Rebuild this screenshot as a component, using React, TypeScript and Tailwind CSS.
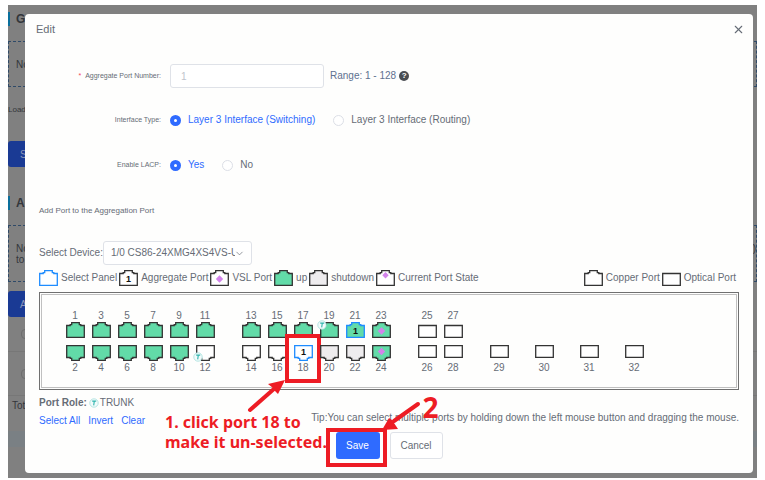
import React from 'react';
import { ChevronDown, X } from 'lucide-react';

type PortKind = 'copper' | 'optical';

type Port = {
  id: number;
  kind?: PortKind;
  fill?: string;
  stroke?: string;
  member?: boolean;
  vsl?: boolean;
  trunk?: boolean;
  marked?: boolean;
};

const UP = '#62dba8';
const DOWN = '#eeecee';
const DARK = '#333333';
const BLUE = '#1e8cff';
const VIOLET = '#d283ea';
const RED = '#ed1c24';

const up = (id: number, extra: Partial<Port> = {}): Port => ({ id, fill: UP, ...extra });
const optical = (id: number): Port => ({ id, kind: 'optical' });

// each column holds the odd port on top and the even one below
const groups: Port[][][] = [
  [
    [up(1), up(2)],
    [up(3), up(4)],
    [up(5), up(6)],
    [up(7), up(8)],
    [up(9), up(10)],
    [up(11), { id: 12, trunk: true }],
  ],
  [
    [up(13), { id: 14 }],
    [up(15), { id: 16 }],
    [up(17), { id: 18, stroke: BLUE, member: true, marked: true }],
    [up(19, { trunk: true }), { id: 20, fill: DOWN }],
    [up(21, { stroke: BLUE, member: true }), { id: 22, fill: DOWN }],
    [up(23, { vsl: true }), up(24, { vsl: true })],
  ],
  [
    [optical(25), optical(26)],
    [optical(27), optical(28)],
  ],
];

const singles: Port[] = [optical(29), optical(30), optical(31), optical(32)];

type IconProps = {
  kind?: PortKind;
  fill?: string;
  stroke?: string;
  flip?: boolean;
  member?: boolean;
  vsl?: boolean;
  state?: boolean;
};

const PortIcon = ({ kind = 'copper', fill = '#ffffff', stroke = DARK, flip, member, vsl, state }: IconProps) => {
  const outline =
    kind === 'optical'
      ? 'M0.7 3.5H18.3V15.3H0.7Z'
      : 'M0.7 15.3V3.5H4.2V2.6H5.7V0.7H13.3V2.6H14.8V3.5H18.3V15.3Z';
  const turned = flip && kind === 'copper';
  const cy = turned ? 6.5 : 9;

  return (
    <svg width="19" height="16" viewBox="0 0 19 16" className="shrink-0" aria-hidden="true">
      <path
        d={outline}
        fill={fill}
        stroke={stroke}
        strokeWidth="1.3"
        transform={flip ? (turned ? 'translate(0 16) scale(1 -1)' : 'translate(0 -3)') : undefined}
      />
      {member && (
        <text x="9.5" y={cy + 3} textAnchor="middle" fontSize="9" fontWeight="700" fill="#111111">
          1
        </text>
      )}
      {vsl && <path d={`M9.5 ${cy - 3.7}l3.7 3.7l-3.7 3.7l-3.7 -3.7Z`} fill={VIOLET} />}
      {state && <path d="M9.5 2l3.2 3.2l-3.2 3.2l-3.2 -3.2Z" fill={VIOLET} />}
    </svg>
  );
};

const TrunkIcon = () => (
  <svg width="10" height="10" viewBox="0 0 10 10" className="shrink-0" aria-hidden="true">
    <circle cx="5" cy="5" r="4.2" fill="#f2fbfb" stroke="#a5dfdc" strokeWidth="0.8" />
    <path d="M3.2 3.1H7.2M5.3 3.1L4.7 7.4" stroke="#2fb5ae" strokeWidth="1.1" fill="none" />
  </svg>
);

const PortButton = ({ port, bottom }: { port: Port; bottom?: boolean }) => (
  <button
    type="button"
    className={`relative flex w-[26px] items-center ${bottom ? 'flex-col' : 'flex-col-reverse'}`}
  >
    <PortIcon
      kind={port.kind}
      fill={port.fill}
      stroke={port.stroke}
      flip={bottom}
      member={port.member}
      vsl={port.vsl}
    />
    <span className="leading-[13px]">{port.id}</span>
    {port.trunk && (
      <span className={`absolute left-px ${bottom ? 'top-[7px]' : 'top-[11px]'}`}>
        <TrunkIcon />
      </span>
    )}
    {port.marked && (
      <>
        <span className="absolute -left-[5px] -top-[11px] h-[49px] w-9 border-4 border-[#ed1c24]" />
        <svg
          width="44"
          height="40"
          viewBox="0 0 44 40"
          className="absolute -left-[44px] top-[32px] z-10"
          aria-hidden="true"
        >
          <path d="M4 33L29 11" stroke={RED} strokeWidth="4" strokeLinecap="round" />
          <path d="M39 3L22 7L27 11L29 14L32 17Z" fill={RED} />
        </svg>
      </>
    )}
  </button>
);

const LegendItem = ({ label, ...icon }: IconProps & { label: string }) => (
  <li className="flex items-center gap-[3px]">
    <PortIcon {...icon} />
    <span className="whitespace-nowrap">{label}</span>
  </li>
);

const Radio = ({ name, label, checked }: { name: string; label: string; checked?: boolean }) => (
  <label className={`flex items-center gap-[7px] ${checked ? 'text-[#2f6bff]' : ''}`}>
    <input
      type="radio"
      name={name}
      defaultChecked={checked}
      className="size-[11px] appearance-none rounded-full border border-[#dcdfe6] bg-white checked:border-4 checked:border-[#2f6bff]"
    />
    {label}
  </label>
);

const FieldName = ({ children }: { children: React.ReactNode }) => (
  <span className="w-[136px] shrink-0 text-right text-[7px]">{children}</span>
);

// dimmed page that stays visible around the dialog
const Backdrop = () => (
  <div className="absolute inset-0 overflow-hidden bg-[#808080] text-[10px] leading-[11px] text-[#33363b]">
    <h2 className="mt-[7px] border-l-2 border-[#0a6f9c] pl-1.5 text-xs font-bold leading-[14px]">G</h2>
    <div className="mt-[15px] flex h-[46px] items-center border border-dashed border-[#2f4a68] pl-[7px]">No</div>
    <p className="mt-[17px] text-[8px]">Load</p>
    <button type="button" className="mt-[26px] block h-[26px] w-10 rounded-[3px] bg-[#1a3a94] pl-3 text-left text-[#8d97b8]">
      S
    </button>
    <h2 className="mt-[29px] border-l-2 border-[#0a6f9c] pl-1.5 text-xs font-bold leading-[14px]">A</h2>
    <div className="mt-[15px] flex h-[57px] items-center justify-between border border-dashed border-[#2f4a68] pl-[7px]">
      <p>
        No
        <br />
        to
      </p>
      <p className="pb-[11px]">)</p>
    </div>
    <button type="button" className="mt-[9px] block h-[26px] w-10 rounded-[3px] bg-[#1a3a94] pl-3 text-left text-[#8d97b8]">
      A
    </button>
    <div className="flex h-[35px] items-center border-b border-[#777777] pl-[13px]">
      <span className="size-[10px] rounded-sm border border-[#6e6e6e]" />
    </div>
    <div className="flex h-11 items-center border-b border-[#777777] pl-[13px]">
      <span className="size-[10px] rounded-sm border border-[#6e6e6e]" />
    </div>
    <p className="mt-1 pl-1">Tot</p>
    <div className="mt-5 h-4 bg-[#7a8084]" />
  </div>
);

const App = () => {
  return (
    <div className="bg-white px-2 pb-0.5 pt-[5px] font-['Liberation_Sans',Arial,sans-serif] text-[10px] leading-3 text-[#666c76]">
      <div className="relative pb-[5px] pl-[17px] pr-1 pt-[9px]">
        <Backdrop />

        <div role="dialog" aria-label="Edit" className="relative rounded-sm bg-[#fefefd] pb-[14px]">
          <header className="flex items-center justify-between pl-[11px] pr-2 pt-[7px]">
            <h1 className="text-[11px] leading-4">Edit</h1>
            <button type="button" aria-label="Close">
              <X size={13} strokeWidth={2} />
            </button>
          </header>

          <form className="mt-[27px]" onSubmit={(e) => e.preventDefault()}>
            <div className="flex h-6 items-center">
              <label htmlFor="port-number" className="flex">
                <FieldName>
                  <span className="mr-1 text-[#f5455c]">*</span>
                  Aggregate Port Number:
                </FieldName>
              </label>
              <input
                id="port-number"
                disabled
                defaultValue="1"
                className="ml-[9px] h-6 w-[154px] rounded-[3px] border border-[#dfe2e8] bg-white px-2.5 text-[10px] text-[#c0c4cc]"
              />
              <span className="ml-1.5 text-[#5e7190]">Range: 1 - 128</span>
              <button
                type="button"
                aria-label="Help"
                className="ml-[3px] flex size-[10px] items-center justify-center rounded-full bg-[#4a4d52] text-[8px] font-bold leading-none text-white"
              >
                ?
              </button>
            </div>

            <div className="mt-5 flex h-6 items-center" role="radiogroup" aria-label="Interface Type">
              <FieldName>Interface Type:</FieldName>
              <div className="ml-[9px] flex gap-[18px]">
                <Radio name="type" label="Layer 3 Interface (Switching)" checked />
                <Radio name="type" label="Layer 3 Interface (Routing)" />
              </div>
            </div>

            <div className="mt-[21px] flex h-6 items-center" role="radiogroup" aria-label="Enable LACP">
              <FieldName>Enable LACP:</FieldName>
              <div className="ml-[9px] flex gap-[18px]">
                <Radio name="lacp" label="Yes" checked />
                <Radio name="lacp" label="No" />
              </div>
            </div>
          </form>

          <section className="pl-[14px] pr-[14px] pt-7">
            <h2 className="text-[8px]">Add Port to the Aggregation Port</h2>

            <div className="mt-[24px] flex items-center">
              <label htmlFor="device">Select Device:</label>
              <div className="relative">
                <select
                  id="device"
                  className="h-6 w-[149px] appearance-none rounded-[3px] border border-[#dfe2e8] bg-white pl-[7px] pr-4"
                >
                  <option>1/0 CS86-24XMG4XS4VS-U</option>
                </select>
                <ChevronDown size={11} strokeWidth={1.5} className="absolute right-[7px] top-[7px]" />
              </div>
            </div>

            <div className="mt-[5px] flex justify-between">
              <ul className="flex gap-0.5">
                <LegendItem label="Select Panel" stroke={BLUE} />
                <LegendItem label="Aggregate Port" member />
                <LegendItem label="VSL Port" vsl />
                <LegendItem label="up" fill={UP} />
                <LegendItem label="shutdown" fill={DOWN} />
                <LegendItem label="Current Port State" state />
              </ul>
              <ul className="flex gap-0.5 pr-[3px]">
                <LegendItem label="Copper Port" />
                <LegendItem label="Optical Port" kind="optical" />
              </ul>
            </div>

            <div className="mt-1.5 border border-[#707070] p-px">
              <div className="flex items-end gap-5 border border-[#c0c0c0] pb-[13px] pl-5 pt-[14px]">
                {groups.map((columns, index) => (
                  <div key={index} className="flex">
                    {columns.map(([top, bottom]) => (
                      <div key={top.id} className="flex flex-col gap-[7px]">
                        <PortButton port={top} />
                        <PortButton port={bottom} bottom />
                      </div>
                    ))}
                  </div>
                ))}
                <div className="flex gap-[19px]">
                  {singles.map((port) => (
                    <PortButton key={port.id} port={port} bottom />
                  ))}
                </div>
              </div>
            </div>

            <div className="relative mt-[7px]">
              <p className="flex items-center">
                <strong>Port Role:</strong>
                <span className="ml-0.5 mr-px">
                  <TrunkIcon />
                </span>
                TRUNK
              </p>
              <div className="mt-[3px] flex justify-between">
                <div className="mt-[3px] flex gap-2 text-[#2f6bff]">
                  <button type="button">Select All</button>
                  <button type="button">Invert</button>
                  <button type="button">Clear</button>
                </div>
                <p>
                  Tip:You can select multiple ports by holding down the left mouse button and dragging the mouse.
                </p>
              </div>
              <p className="absolute left-[126px] top-[15px] font-['Noto_Sans','Open_Sans',sans-serif] text-base font-bold leading-5 text-[#ed1c24]">
                1. click port 18 to
                <br />
                make it un-selected.
              </p>
            </div>
          </section>

          <footer className="mt-[5px] flex justify-center gap-[10px]">
            <div className="relative">
              <button type="button" className="h-[27px] w-11 rounded-[3px] bg-[#2f6bff] text-white">
                Save
              </button>
              <span className="absolute -left-[10px] -top-1 h-[39px] w-[61px] border-4 border-[#ed1c24]" />
              <svg
                width="44"
                height="36"
                viewBox="0 0 44 36"
                className="absolute left-[42px] -top-[32px]"
                aria-hidden="true"
              >
                <path d="M40 4L16 21" stroke={RED} strokeWidth="4" strokeLinecap="round" />
                <path d="M4 30L11 18L14 20L16 23L20 29Z" fill={RED} />
              </svg>
              <span className="absolute -top-[39px] left-[87px] font-['Noto_Sans','Open_Sans',sans-serif] text-[28px] font-bold leading-7 text-[#ed1c24]">
                2
              </span>
            </div>
            <button type="button" className="h-[27px] w-[53px] rounded-[3px] border border-[#dfe2e8] bg-white">
              Cancel
            </button>
          </footer>
        </div>
      </div>
    </div>
  );
};

export default App;
